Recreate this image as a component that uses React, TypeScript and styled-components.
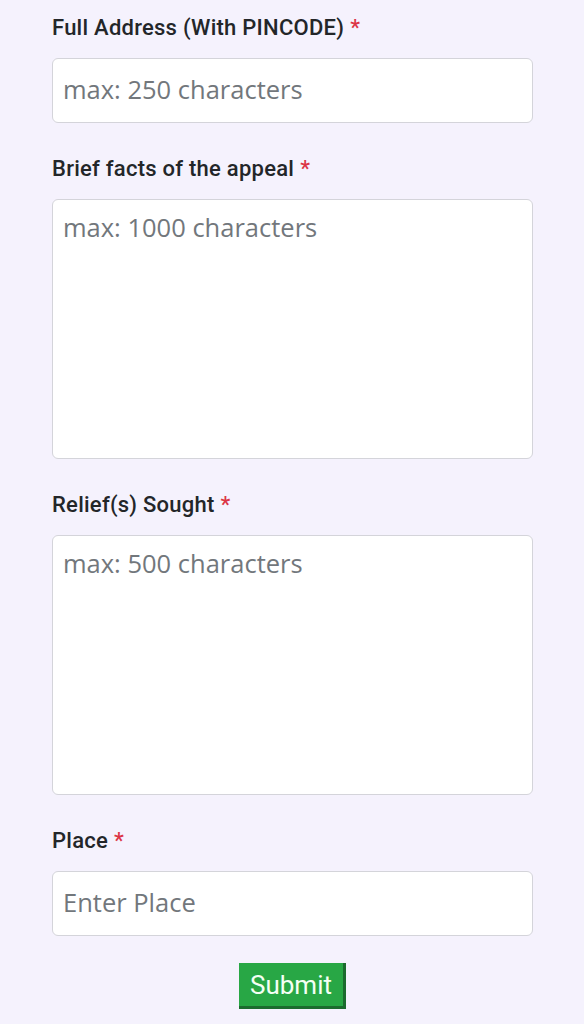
import React from "react";
import styled, { createGlobalStyle } from "styled-components";

const Global = createGlobalStyle`
  html, body { margin: 0; padding: 0; background: #f5f2fd; }
  body { font-family: Roboto, "Liberation Sans", sans-serif; }
  * { box-sizing: border-box; }
`;

const Form = styled.form`
  padding: 16px 51px 16px 52px;
  display: flex;
  flex-direction: column;
  min-height: 1024px;
`;

const Group = styled.div`
  display: flex;
  flex-direction: column;
  margin-bottom: 34px;
`;

const Label = styled.label`
  font-family: Roboto, "Liberation Sans", sans-serif;
  font-weight: 500;
  font-size: 22px;
  letter-spacing: 0.25px;
  line-height: 24px;
  color: #232629;
  margin-bottom: 18px;
`;

const Req = styled.span`
  color: #dc3545;
  margin-left: 6px;
`;

const fieldBase = `
  width: 100%;
  background: #ffffff;
  border: 1px solid #d4d4da;
  border-radius: 6px;
  font-family: "Open Sans", "Noto Sans", sans-serif;
  font-size: 25.5px;
  letter-spacing: 0;
  color: #212529;
  padding: 0 10px;
  outline: none;
  &::placeholder { color: #72777c; opacity: 1; }
`;

const Input = styled.input`
  ${fieldBase}
  height: 65px;
  padding-bottom: 3px;
`;

const TextArea = styled.textarea<{ $h: number }>`
  ${fieldBase}
  height: ${(p) => p.$h}px;
  padding-top: 10px;
  resize: none;
  display: block;
`;

const Actions = styled.div`
  display: flex;
  justify-content: center;
  margin-top: -7px;
`;

const Submit = styled.button`
  font-family: Roboto, "Liberation Sans", sans-serif;
  font-size: 26px;
  color: #f4fff4;
  background: #28a745;
  border: none;
  border-right: 3px solid #1b6b2e;
  border-bottom: 3px solid #1b6b2e;
  width: 107px;
  height: 46px;
  padding: 0;
`;

export default function App() {
  return (
    <>
      <Global />
      <Form onSubmit={(e) => e.preventDefault()}>
        <Group>
          <Label>Full Address (With PINCODE)<Req>*</Req></Label>
          <Input placeholder="max: 250 characters" />
        </Group>
        <Group>
          <Label>Brief facts of the appeal<Req>*</Req></Label>
          <TextArea $h={260} placeholder="max: 1000 characters" />
        </Group>
        <Group>
          <Label>Relief(s) Sought<Req>*</Req></Label>
          <TextArea $h={260} placeholder="max: 500 characters" />
        </Group>
        <Group>
          <Label>Place<Req>*</Req></Label>
          <Input placeholder="Enter Place" />
        </Group>
        <Actions>
          <Submit type="submit">Submit</Submit>
        </Actions>
      </Form>
    </>
  );
}
